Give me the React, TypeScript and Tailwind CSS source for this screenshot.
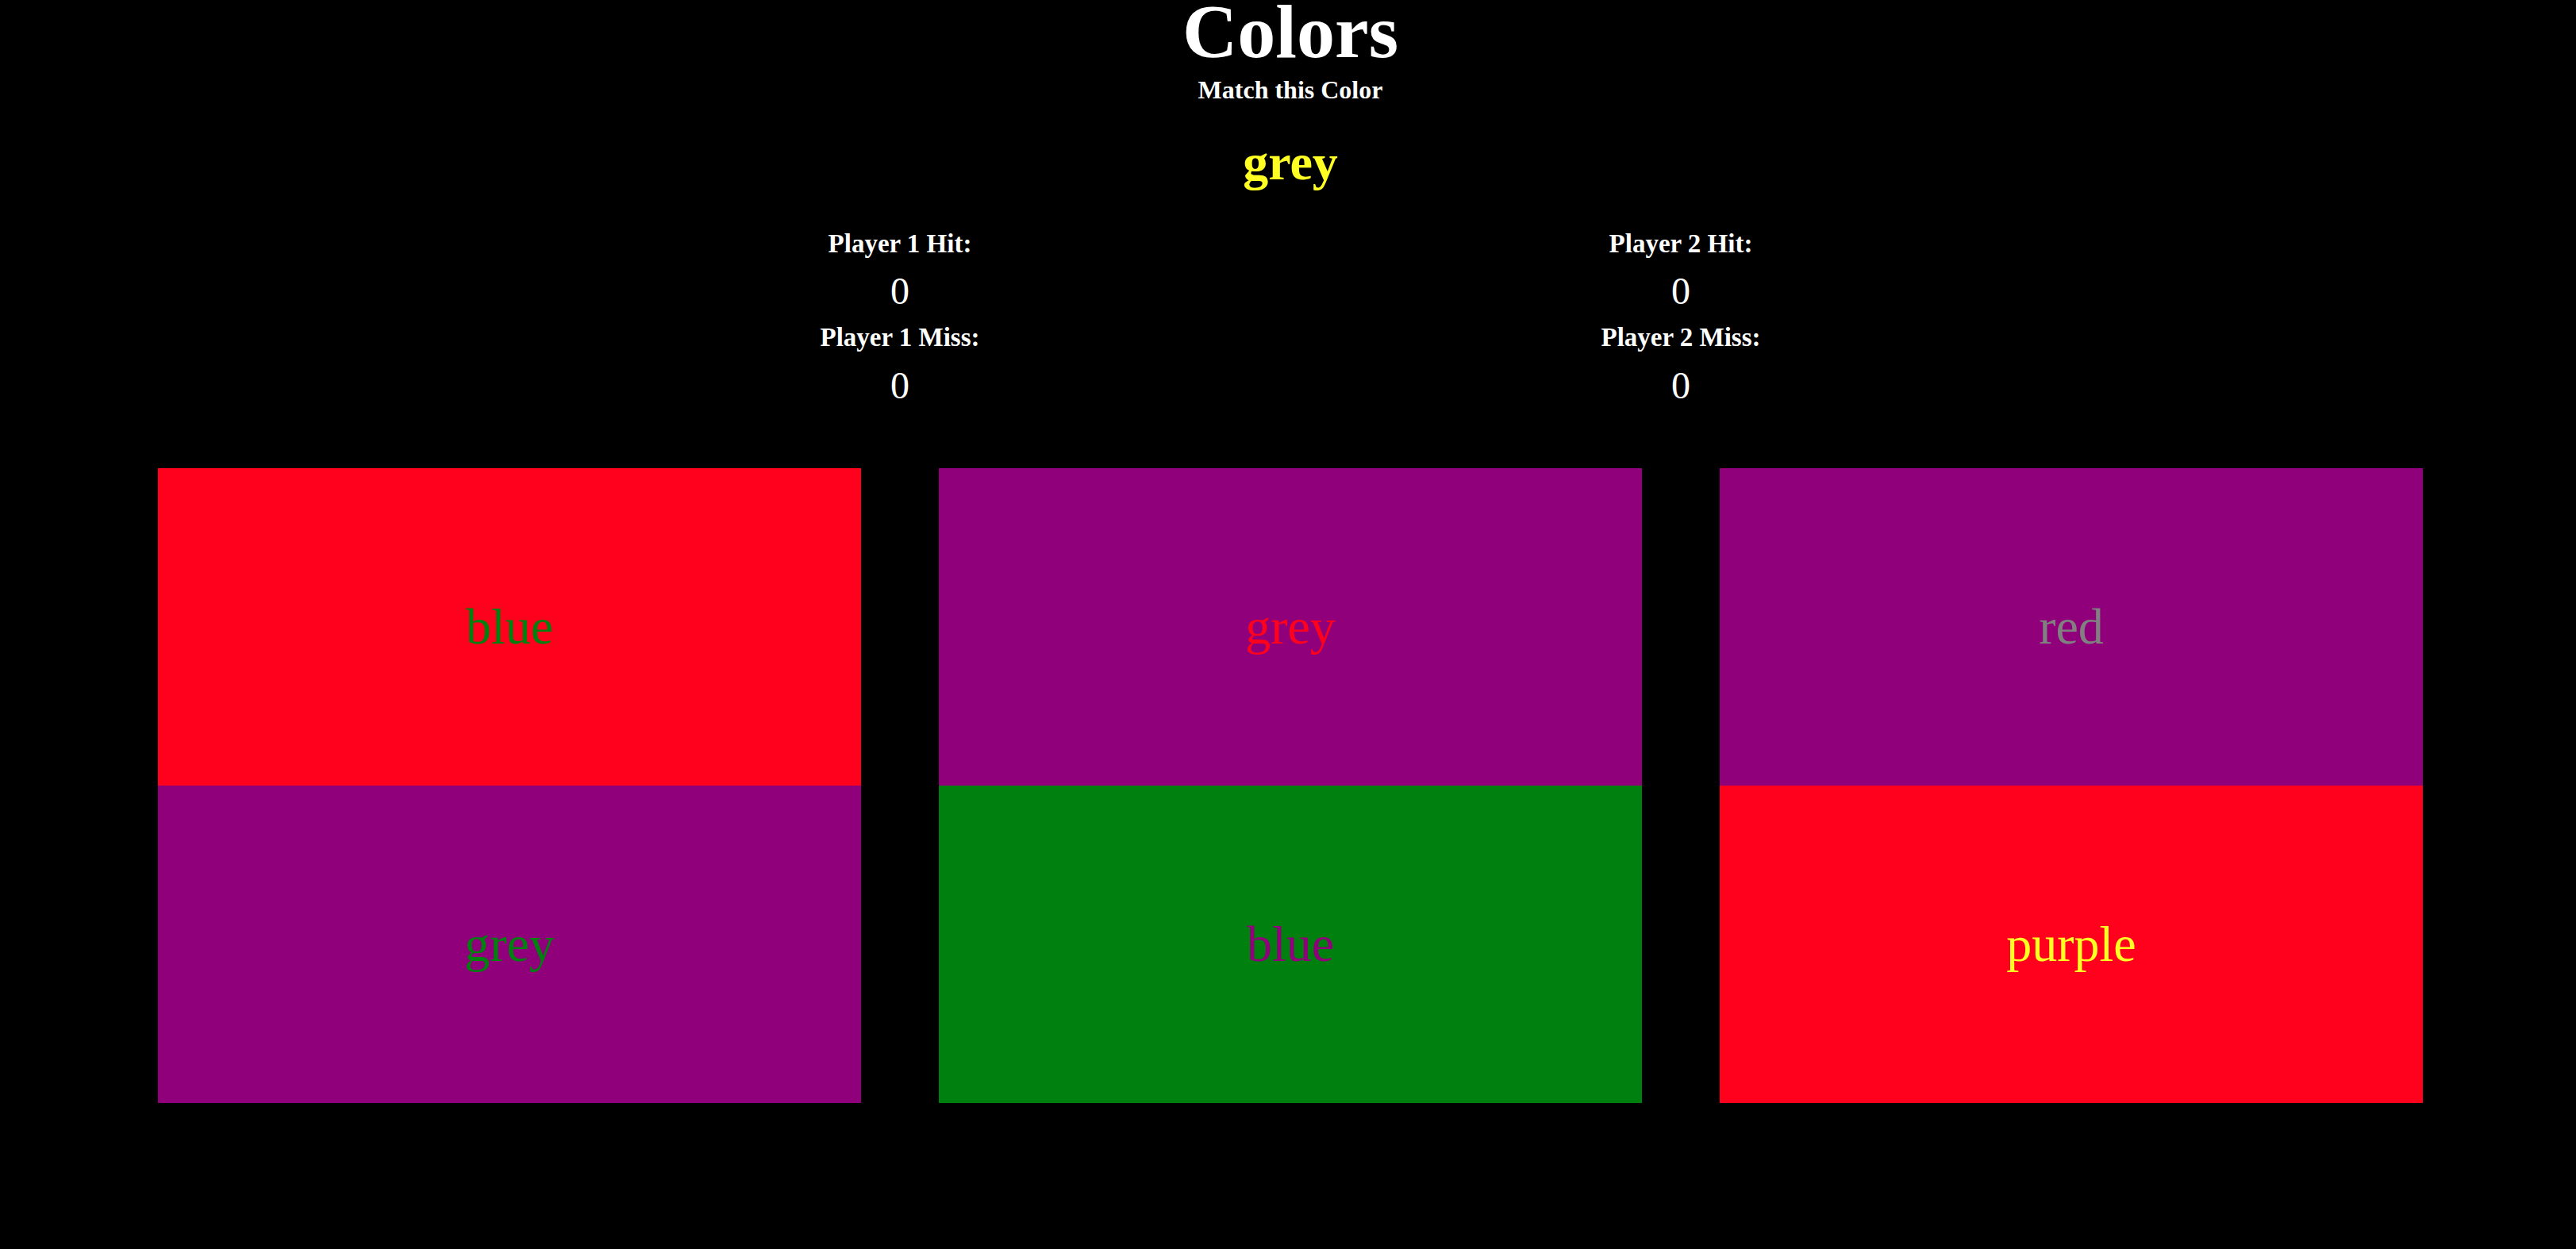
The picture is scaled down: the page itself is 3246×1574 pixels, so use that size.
const RED = "bg-[#ff001d]";

type Half = { label: string; bg: string; text: string };

const tiles: { top: Half; bottom: Half }[] = [
  {
    top: { label: "blue", bg: RED, text: "text-[#00800e]" },
    bottom: { label: "grey", bg: "bg-[#8f007a]", text: "text-[#00800e]" },
  },
  {
    top: { label: "grey", bg: "bg-[#8f007a]", text: "text-[#ff001d]" },
    bottom: { label: "blue", bg: "bg-[#00800e]", text: "text-[#8f007a]" },
  },
  {
    top: { label: "red", bg: "bg-[#8f007a]", text: "text-[#808080]" },
    bottom: { label: "purple", bg: RED, text: "text-[#ffff24]" },
  },
];

function HalfBox({ half }: { half: Half }) {
  return (
    <div className={`flex h-[400px] items-center justify-center ${half.bg}`}>
      <span className={`text-[64px] leading-[72px] ${half.text}`}>{half.label}</span>
    </div>
  );
}

function Score({ player }: { player: number }) {
  return (
    <div className="flex w-[984px] flex-col items-center">
      <p className="text-[33px] font-bold leading-[36px]">Player {player} Hit:</p>
      <p className="mt-[15px] text-[48px] leading-[54px]">0</p>
      <p className="mt-[13px] text-[33px] font-bold leading-[36px]">Player {player} Miss:</p>
      <p className="mt-[16px] text-[48px] leading-[54px]">0</p>
    </div>
  );
}

export default function App() {
  return (
    <div className="min-h-screen w-full bg-black font-['Liberation_Serif',serif] text-white">
      {/* Header */}
      <div className="flex flex-col items-center pl-[6px]">
        <h1 className="text-[96px] font-bold leading-[80px]">Colors</h1>
        <p className="mt-[15px] text-[32px] font-bold leading-[36px]">Match this Color</p>
        <p className="mt-[38px] text-[64px] font-bold leading-[72px] text-[#ffff24]">grey</p>
      </div>

      {/* Scores */}
      <div className="mt-[48px] flex justify-center pl-[6px]">
        <Score player={1} />
        <Score player={2} />
      </div>

      {/* Tiles */}
      <div className="ml-[199px] mt-[77px] flex gap-[98px]">
        {tiles.map((t, i) => (
          <div key={i} className="flex w-[886px] flex-col">
            <HalfBox half={t.top} />
            <HalfBox half={t.bottom} />
          </div>
        ))}
      </div>
    </div>
  );
}
